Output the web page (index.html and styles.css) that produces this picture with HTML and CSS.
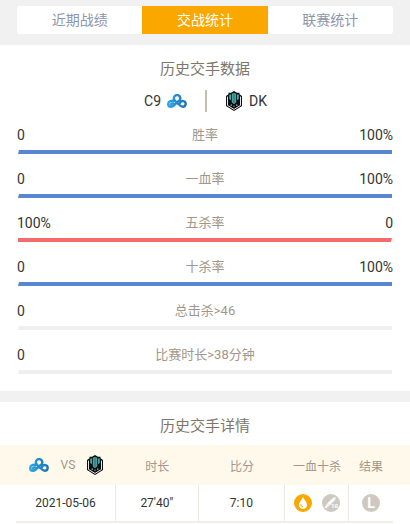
FILE: index.html
```html
<!DOCTYPE html>
<html lang="zh-CN">
    <head>
        <meta charset="utf-8">
        <title>交战统计</title>
        <meta name="viewport" content="width=device-width, initial-scale=1">
        <link rel="stylesheet" href="styles.css">
    </head>
    <body>
        <nav class="tabs">
            <button class="tab" type="button">近期战绩</button>
            <button class="tab active" type="button">交战统计</button>
            <button class="tab" type="button">联赛统计</button>
        </nav>

        <section class="panel stats">
            <h2>历史交手数据</h2>
            <div class="teams">
                <div class="team home">
                    <span>C9</span>
                    <svg class="logo-c9" viewBox="0 0 20 14" role="img" aria-label="C9">
                        <defs>
                            <linearGradient id="cloud-blue" x1="0" y1="0" x2="1" y2="0">
                                <stop offset="0" stop-color="#2ba6e4"/>
                                <stop offset="1" stop-color="#1c72b8"/>
                            </linearGradient>
                            <symbol id="logo-c9" viewBox="0 0 20 14">
                                <path d="M11 7.3A3.2 3.2 0 1 0 7 5C7.4 7.2 9.6 8.2 11 9.6C12.6 11.3 13.8 12.8 15.8 12.8A2.9 2.9 0 1 0 13 9M7.2 7C4.6 6.2 1.2 7 1.2 10.1A2.8 2.8 0 0 0 4 12.8C6.8 12.8 7.2 10.4 9.4 9.2M4 10.2C4.8 9 6.2 9.2 6.9 10" fill="none" stroke="url(#cloud-blue)" stroke-width="2.4" stroke-linecap="round"/>
                            </symbol>
                            <symbol id="logo-dk" viewBox="0 0 16 20">
                                <path d="M8 0L11 1.8H13.5V3.2L16 5V15L8 20L0 15V5L2.5 3.2V1.8H5Z" fill="#0b0f12"/>
                                <path d="M1.5 5.6V14.4L8 18.4L14.5 14.4V5.6" fill="none" stroke="#fff" stroke-width=".9"/>
                                <path d="M3.2 3.4H5V9.2L3.2 8ZM5.8 2.6H7V12.2L5.8 11.5ZM7.2 2H8.8V13H7.2ZM9 2.6H10.2V11.5L9 12.2ZM11 3.4H12.8V8L11 9.2Z" fill="#45a5a5"/>
                                <path d="M4 14L6 13.4L5.6 14.8ZM12 14L10 13.4L10.4 14.8ZM7.3 14.8H8.7L8 16Z" fill="#fff"/>
                            </symbol>
                        </defs>
                        <use href="#logo-c9"/>
                    </svg>
                </div>
                <div class="team away">
                    <svg class="logo-dk" role="img" aria-label="DK"><use href="#logo-dk"/></svg>
                    <span>DK</span>
                </div>
            </div>

            <div class="stat">
                <span>0</span><span class="label">胜率</span><span class="value">100%</span>
                <div class="bar blue"></div>
            </div>
            <div class="stat">
                <span>0</span><span class="label">一血率</span><span class="value">100%</span>
                <div class="bar blue"></div>
            </div>
            <div class="stat">
                <span>100%</span><span class="label">五杀率</span><span class="value">0</span>
                <div class="bar red"></div>
            </div>
            <div class="stat">
                <span>0</span><span class="label">十杀率</span><span class="value">100%</span>
                <div class="bar blue"></div>
            </div>
            <div class="stat">
                <span>0</span><span class="label">总击杀&gt;46</span><span class="value"></span>
                <div class="bar"></div>
            </div>
            <div class="stat">
                <span>0</span><span class="label">比赛时长&gt;38分钟</span><span class="value"></span>
                <div class="bar"></div>
            </div>
        </section>

        <section class="panel details">
            <h2>历史交手详情</h2>
            <table>
                <colgroup>
                    <col class="col-match">
                    <col class="col-time">
                    <col class="col-score">
                    <col class="col-first">
                    <col class="col-result">
                </colgroup>
                <thead>
                    <tr>
                        <th>
                            <div class="versus">
                                <svg class="logo-c9" role="img" aria-label="C9"><use href="#logo-c9"/></svg>
                                <span>VS</span>
                                <svg class="logo-dk" role="img" aria-label="DK"><use href="#logo-dk"/></svg>
                            </div>
                        </th>
                        <th>时长</th>
                        <th>比分</th>
                        <th>一血十杀</th>
                        <th>结果</th>
                    </tr>
                </thead>
                <tbody>
                    <tr>
                        <td>2021-05-06</td>
                        <td>27'40"</td>
                        <td>7:10</td>
                        <td>
                            <div class="badges">
                                <svg class="badge" viewBox="0 0 18 18" role="img" aria-label="一血">
                                    <circle cx="9" cy="9" r="9" fill="#faa700"/>
                                    <path d="M9 3C10 5.6 13 8 13 10.8A4 4 0 0 1 5 10.8C5 8 8 5.6 9 3Z" fill="#fff"/>
                                    <path d="M6.8 10.6Q7 12.6 8.8 12.9" fill="none" stroke="#faa700" stroke-width="1" stroke-linecap="round"/>
                                </svg>
                                <svg class="badge" viewBox="0 0 18 18" role="img" aria-label="十杀">
                                    <circle cx="9" cy="9" r="9" fill="#cdc8c0"/>
                                    <path d="M13.4 3.3L12.8 6.1L7.4 11.2L5.5 9.3L10.9 4.2ZM5 9.8L7 11.8L6 12.3L4 14.2L2.8 13L4.7 11Z" fill="#fff" stroke="#fff" stroke-width=".5"/>
                                    <text x="9" y="14" class="ten">10</text>
                                </svg>
                            </div>
                        </td>
                        <td>
                            <div class="badges">
                                <span class="badge lose">L</span>
                            </div>
                        </td>
                    </tr>
                </tbody>
            </table>
        </section>
    </body>
</html>
```

FILE: styles.css
```css
body {
    background: #f1f1f1;
    font-family: Roboto, "Noto Sans CJK SC", sans-serif;
    margin: 0;
    color: #333;
    font-size: 14px;
}

.tabs {
    display: flex;
    margin: 6px 17px 11px;
    border-radius: 3px;
    background: #fff;
    overflow: hidden;
}

.tab {
    flex: 1;
    height: 28px;
    padding: 0;
    border: 0;
    background: none;
    color: #8c96ac;
    font: inherit;
    line-height: 28px;
}

.tab.active {
    background: #faa700;
    color: #fff;
}

.panel {
    background: #fff;
    padding-top: 12px;
}

h2 {
    margin: 0;
    color: #807668;
    font-size: 15px;
    font-weight: 400;
    line-height: 24px;
    text-align: center;
}

.teams {
    display: grid;
    grid-template-columns: 1fr 1fr;
    margin: 9px 0 8px;
}

.team {
    display: flex;
    align-items: center;
    height: 22px;
}

.home {
    justify-content: flex-end;
    gap: 6px;
    padding-right: 18px;
}

.away {
    gap: 7px;
    padding-left: 19px;
    border-left: 2px solid #c7bdae;
}

.logo-c9 {
    width: 20px;
    height: 14px;
}

.logo-dk {
    width: 16px;
    height: 20px;
}

.stats {
    padding-bottom: 7px;
    margin-bottom: 11px;
}

.stat {
    display: grid;
    grid-template-columns: 1fr auto 1fr;
    align-items: center;
    margin: 0 17px;
    padding-bottom: 10px;
    line-height: 30px;
}

.label {
    color: #a1978a;
    font-size: 13px;
}

.value {
    text-align: right;
}

/* both ends are cut at a slight slant */
.bar {
    grid-column: 1 / -1;
    height: 4px;
    margin: 0 1px;
    background: #efefef;
    clip-path: polygon(1px 0, 100% 0, 100% 100%, 0 100%);
}

.blue {
    background: #5886d0;
}

.red {
    background: #f36c6b;
    clip-path: polygon(0 0, 100% 0, calc(100% - 1px) 100%, 0 100%);
}

.details {
    padding-bottom: 1px;
}

table {
    width: calc(100% - 33px);
    margin: 7px 17px 0 16px;
    border-spacing: 0;
    table-layout: fixed;
    font-size: 12px;
    text-align: center;
}

.col-match { width: 100px; }
.col-time { width: 22%; }
.col-score { width: 23%; }
.col-first { width: 17%; }
.col-result { width: 44px; }

th {
    height: 40px;
    padding: 0;
    color: #a1978a;
    font-weight: 400;
}

/* header colour runs out to the panel's edges */
thead tr {
    background: #fff9ec;
    box-shadow: 17px 0 #fff9ec, -17px 0 #fff9ec;
}

.versus {
    display: flex;
    align-items: center;
    justify-content: center;
    gap: 12px;
}

td {
    height: 36px;
    padding: 0;
    border-right: 1px solid #ece9e4;
    border-bottom: 2px solid #f1eee8;
}

td:last-child {
    border-right: 0;
}

.badges {
    display: flex;
    justify-content: center;
    gap: 10px;
}

.badge {
    width: 18px;
    height: 18px;
}

.ten {
    fill: #fff;
    font-size: 6px;
    font-weight: 700;
}

.lose {
    border-radius: 50%;
    background: #cdc8c0;
    color: #fff;
    font-size: 14px;
    font-weight: 700;
    line-height: 18px;
}
```
